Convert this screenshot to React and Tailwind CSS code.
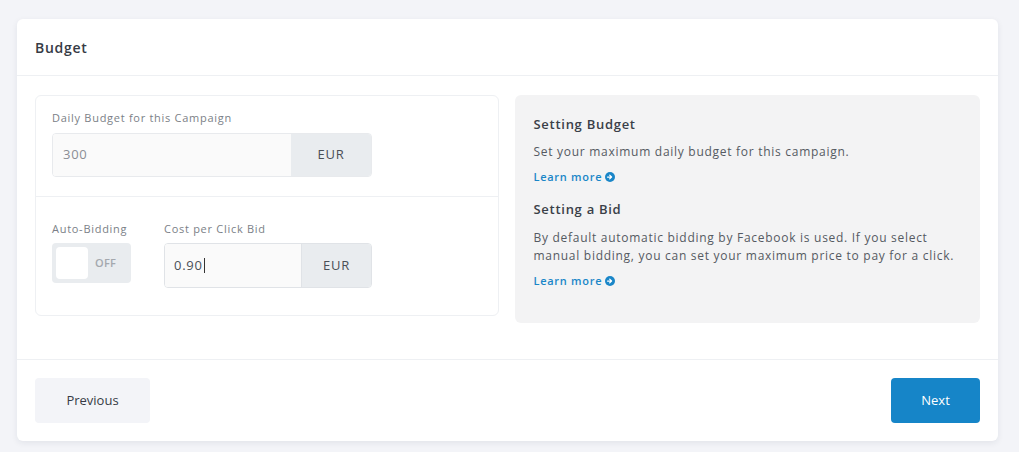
export default function App() {
  return (
    <div className="min-h-screen bg-[#f3f4f8] pl-[17px] pr-[21px] pt-[19px] pb-3 tracking-[0.045em]" style={{ fontFamily: '"Open Sans", sans-serif' }}>
      <div className="rounded-md bg-white shadow-[0_2px_6px_rgba(30,40,60,0.08)]">
        <div className="border-b border-[#eef0f3] px-[18px] h-[57px] flex items-center">
          <h2 className="text-[14px] font-semibold text-[#363b45]">Budget</h2>
        </div>

        <div className="flex gap-4 px-[18px] pt-[19px] pb-9">
          <div className="w-[465px] rounded-md border border-[#eef0f3] self-start">
            <div className="px-4 pt-[14px] pb-[19px] border-b border-[#eef0f3]">
              <label className="block text-[11px] text-[#7b7f87] mb-[6px]">Daily Budget for this Campaign</label>
              <div className="flex w-[320px] h-[44px] rounded border border-[#e8eaed] overflow-hidden">
                <div className="flex-1 bg-[#fafafa] flex items-center px-[10px] text-[13px] text-[#8a8e95]">300</div>
                <div className="w-[80px] bg-[#e9ecef] flex items-center justify-center text-[13px] text-[#4a4f57]">EUR</div>
              </div>
            </div>
            <div className="flex gap-[33px] px-4 pt-[24px] pb-[27px]">
              <div>
                <label className="block text-[11px] text-[#7b7f87] mb-[6px]">Auto-Bidding</label>
                <div className="w-[79px] h-[40px] rounded bg-[#e9ecef] flex items-center p-[4px]">
                  <div className="w-[32px] h-[32px] rounded-sm bg-white"></div>
                  <span className="ml-[7px] text-[11px] font-semibold text-[#a4a8ae] tracking-wide">OFF</span>
                </div>
              </div>
              <div>
                <label className="block text-[11px] text-[#7b7f87] mb-[6px]">Cost per Click Bid</label>
                <div className="flex w-[208px] h-[45px] rounded border border-[#e0e3e7] overflow-hidden">
                  <div className="flex-1 bg-[#fafafa] flex items-center px-[9px] text-[13px] text-[#4a4f57]">
                    0.90<span className="inline-block w-px h-[15px] bg-[#333] ml-px"></span>
                  </div>
                  <div className="w-[70px] bg-[#e9ecef] border-l border-[#e0e3e7] flex items-center justify-center text-[13px] text-[#4a4f57]">EUR</div>
                </div>
              </div>
            </div>
          </div>

          <div className="w-[465px] h-[228px] rounded-md bg-[#f3f3f4] px-[18px] pt-[20px]">
            <h3 className="text-[13px] font-semibold text-[#3a3f48]">Setting Budget</h3>
            <p className="mt-[8px] text-[12px] text-[#555a62]">Set your maximum daily budget for this campaign.</p>
            <a className="mt-[8px] flex items-center gap-[3px] text-[11px] font-semibold text-[#1a86c8]">
              Learn more <ArrowCircle />
            </a>
            <h3 className="mt-[15px] text-[13px] font-semibold text-[#3a3f48]">Setting a Bid</h3>
            <p className="mt-[9px] text-[12px] leading-[18px] text-[#555a62]">
              By default automatic bidding by Facebook is used. If you select<br />
              manual bidding, you can set your maximum price to pay for a click.
            </p>
            <a className="mt-[8px] flex items-center gap-[3px] text-[11px] font-semibold text-[#1a86c8]">
              Learn more <ArrowCircle />
            </a>
          </div>
        </div>

        <div className="border-t border-[#eef0f3] px-[18px] pt-[18px] pb-[18px] flex justify-between tracking-normal">
          <button className="w-[115px] h-[45px] rounded bg-[#f3f4f8] text-[13px] font-medium text-[#363b45]">Previous</button>
          <button className="w-[89px] h-[45px] rounded bg-[#1685c8] text-[13px] font-medium text-white">Next</button>
        </div>
      </div>
    </div>
  );
}

function ArrowCircle() {
  return (
    <svg width="10" height="10" viewBox="0 0 16 16">
      <circle cx="8" cy="8" r="8" fill="#1a86c8" />
      <path d="M4 8h6M7.5 5l3 3-3 3" stroke="#fff" strokeWidth="2" fill="none" strokeLinecap="round" strokeLinejoin="round" />
    </svg>
  );
}
